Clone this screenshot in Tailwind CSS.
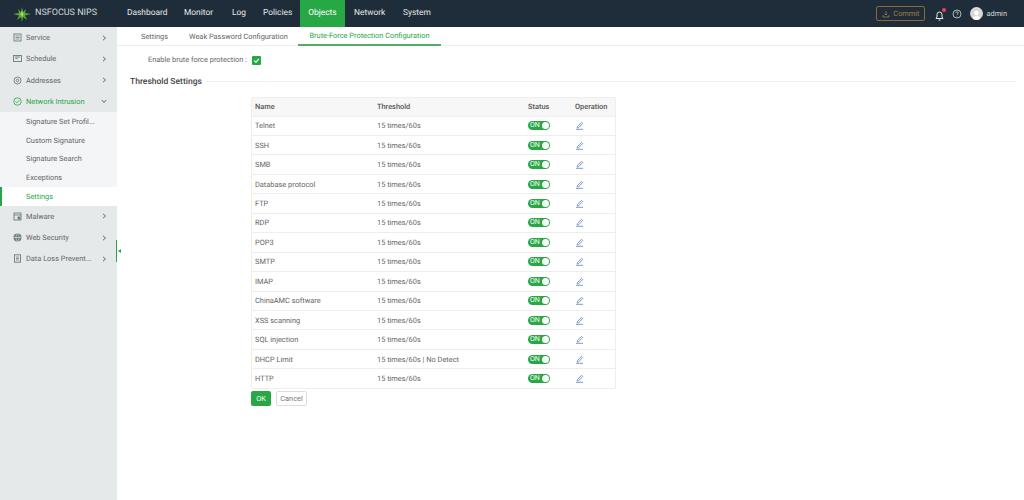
<!DOCTYPE html>
<html><head><meta charset="utf-8"><script src="https://cdn.jsdelivr.net/npm/@tailwindcss/browser@4"></script></head>
<body class="m-0 bg-white">
<div class="w-[1024px] h-[500px] overflow-hidden flex flex-col font-['Roboto','Open_Sans',sans-serif] [text-rendering:geometricPrecision] text-[7.4px] text-[#666]">
<header class="h-[27px] shrink-0 bg-[#1f2d3a] flex items-center text-[#e6e8ea]">
  <div class="w-[117px] flex items-center pl-[13px] gap-[4px]">
    <svg width="18" height="16" viewBox="0 0 18 16"><path d="M9 1 L10 6 L13 3 L12 7 L18 8 L12 9.5 L14 14 L10 11 L9 16 L8 11 L4 14 L6 9.5 L0 8 L6 7 L5 3 L8 6 Z" fill="#5aa83a"/><path d="M9 5 L10.500 8 L9 11 L7.500 8Z" fill="#a8d86a"/></svg>
    <span class="text-[9px] text-[#d5d9dc] whitespace-nowrap">NSFOCUS NIPS</span>
  </div>
  <nav class="flex h-full text-[8.4px] ml-[1px]">
    <a class="pl-[9px] w-[58px] flex items-center">Dashboard</a>
    <a class="pl-[8px] w-[48px] flex items-center">Monitor</a>
    <a class="pl-[8px] w-[31px] flex items-center">Log</a>
    <a class="pl-[8px] w-[45px] flex items-center">Policies</a>
    <a class="w-[45px] justify-center flex items-center bg-[#28a745] text-white">Objects</a>
    <a class="pl-[9px] w-[49px] flex items-center">Network</a>
    <a class="pl-[9px] flex items-center">System</a>
  </nav>
  <div class="ml-auto flex items-center pr-[17px]">
    <div class="w-[49px] h-[15px] border border-[#8a6a3a] rounded-[2px] flex items-center justify-center gap-[3px] text-[#9a7a45]">
      <svg width="8" height="8" viewBox="0 0 8 8" fill="none" stroke="#a67c3f" stroke-width=".8"><path d="M1 5v2h6V5M4 1v4M2.800 3.800 4 5l1.200-1.200"/></svg><span>Commit</span>
    </div>
    <div class="relative ml-[10px] w-[9px] h-[12px]">
      <svg width="9" height="11" viewBox="0 0 9 11" fill="none" stroke="#e6e8ea" stroke-width="1" class="mt-[2px]"><path d="M1 8.500h7L7 7V4.500a2.500 2.500 0 0 0-5 0V7ZM3.500 10h2"/></svg>
      <span class="absolute top-[0px] right-[-2px] w-[4px] h-[4px] rounded-full bg-[#f0405a]"></span>
    </div>
    <svg class="ml-[8px]" width="10" height="10" viewBox="0 0 10 10" fill="none" stroke="#d5d9dc" stroke-width=".8"><circle cx="5" cy="5" r="4"/><path d="M3.800 4a1.200 1.200 0 1 1 1.700 1.100c-.4.200-.5.400-.5.800M5 7.200v.4"/></svg>
    <div class="ml-[8px] w-[13px] h-[13px] rounded-full bg-[#d8d8d8] flex items-end justify-center overflow-hidden">
      <svg width="11" height="11" viewBox="0 0 11 11" fill="#fff"><circle cx="5.500" cy="4" r="2.300"/><path d="M1.500 11c0-3 2-4.300 4-4.300s4 1.300 4 4.300Z"/></svg>
    </div>
    <span class="ml-[3px] text-[#d5d9dc]">admin</span>
  </div>
</header>
<div class="flex flex-1 min-h-0">
  <aside class="relative w-[117px] shrink-0 bg-[#e5e9ea]">
    <div class="h-[21.300px] flex items-center pl-[13px] pr-[10px] gap-[3px]">
      <svg width="9" height="9" viewBox="0 0 9 9" fill="none" stroke="#6f7a7d"><rect x="1" y="1" width="7" height="7" stroke-width=".9"/><path d="M2.500 3h4M2.500 4.500h4M2.500 6h4" stroke-width=".7"/></svg><span class="ml-[1px]">Service</span>
      <svg class="ml-auto" width="5" height="6" viewBox="0 0 5 6" fill="none" stroke="#666" stroke-width="1"><path d="M1 .8 3.500 3 1 5.200"/></svg>
    </div>
    <div class="h-[21.300px] flex items-center pl-[13px] pr-[10px] gap-[3px]">
      <svg width="9" height="9" viewBox="0 0 9 9" fill="none" stroke="#6f7a7d" stroke-width=".9"><rect x=".5" y="1.500" width="8" height="6"/><path d="M2.500 4.500h2M2 3h5"/></svg><span class="ml-[1px]">Schedule</span>
      <svg class="ml-auto" width="5" height="6" viewBox="0 0 5 6" fill="none" stroke="#666" stroke-width="1"><path d="M1 .8 3.500 3 1 5.200"/></svg>
    </div>
    <div class="h-[21.300px] flex items-center pl-[13px] pr-[10px] gap-[3px]">
      <svg width="9" height="9" viewBox="0 0 9 9" fill="none" stroke="#6f7a7d" stroke-width=".9"><circle cx="4.500" cy="4.500" r="3.500"/><circle cx="4.500" cy="4.500" r="1.300"/></svg><span class="ml-[1px]">Addresses</span>
      <svg class="ml-auto" width="5" height="6" viewBox="0 0 5 6" fill="none" stroke="#666" stroke-width="1"><path d="M1 .8 3.500 3 1 5.200"/></svg>
    </div>
    <div class="h-[21.300px] flex items-center pl-[13px] pr-[10px] gap-[3px] text-[#28a745]">
      <svg width="9" height="9" viewBox="0 0 9 9" fill="none" stroke="#28a745" stroke-width=".8"><circle cx="4.500" cy="4.500" r="3.700"/><path d="M2.800 4.500 4 5.800l2.300-2.600"/></svg><span class="ml-[1px]">Network Intrusion</span>
      <svg class="ml-auto" width="6" height="5" viewBox="0 0 6 5" fill="none" stroke="#666" stroke-width="1"><path d="M.8 1 3 3.500 5.200 1"/></svg>
    </div>
    <div class="bg-[#f3f5f6]">
      <div class="h-[18.700px] flex items-center pl-[26px]">Signature Set Profil...</div>
      <div class="h-[18.700px] flex items-center pl-[26px]">Custom Signature</div>
      <div class="h-[18.700px] flex items-center pl-[26px]">Signature Search</div>
      <div class="h-[18.700px] flex items-center pl-[26px]">Exceptions</div>
      <div class="h-[18.700px] flex items-center bg-white text-[#28a745] border-l-2 border-[#28a745] pl-[24px]">Settings</div>
    </div>
    <div class="h-[21.300px] flex items-center pl-[13px] pr-[10px] gap-[3px]">
      <svg width="9" height="9" viewBox="0 0 9 9" fill="none" stroke="#6f7a7d" stroke-width=".9"><rect x="1" y="1" width="7" height="7"/><path d="M1 3h7"/><rect x="5" y="5" width="2" height="2" fill="#6f7a7d"/></svg><span class="ml-[1px]">Malware</span>
      <svg class="ml-auto" width="5" height="6" viewBox="0 0 5 6" fill="none" stroke="#666" stroke-width="1"><path d="M1 .8 3.500 3 1 5.200"/></svg>
    </div>
    <div class="h-[21.300px] flex items-center pl-[13px] pr-[10px] gap-[3px]">
      <svg width="9" height="9" viewBox="0 0 9 9" fill="#6f7a7d"><circle cx="4.500" cy="4.500" r="4"/><path d="M.5 4.500h8M4.500.5c-2 2.500-2 5.500 0 8M4.500.5c2 2.500 2 5.500 0 8" stroke="#e5e9ea" stroke-width=".6" fill="none"/></svg><span class="ml-[1px]">Web Security</span>
      <svg class="ml-auto" width="5" height="6" viewBox="0 0 5 6" fill="none" stroke="#666" stroke-width="1"><path d="M1 .8 3.500 3 1 5.200"/></svg>
    </div>
    <div class="h-[21.300px] flex items-center pl-[13px] pr-[10px] gap-[3px]">
      <svg width="9" height="9" viewBox="0 0 9 9" fill="none" stroke="#6f7a7d" stroke-width=".9"><rect x="1.500" y=".8" width="6" height="7.400"/><path d="M3 3h3M3 4.500h3M3 6h3" stroke-width=".7"/></svg><span class="ml-[1px] whitespace-nowrap">Data Loss Prevent...</span>
      <svg class="ml-auto shrink-0" width="5" height="6" viewBox="0 0 5 6" fill="none" stroke="#666" stroke-width="1"><path d="M1 .8 3.500 3 1 5.200"/></svg>
    </div>
    <div class="absolute top-[213px] left-[116px] w-[5px] h-[22px] border-l border-[#28a745] flex items-center">
      <svg width="3" height="4" viewBox="0 0 3 4" class="ml-[1px]"><path d="M3 0v4L0 2Z" fill="#28a745"/></svg>
    </div>
  </aside>
  <main class="flex-1 min-w-0">
    <div class="h-[19px] border-b border-[#eeeeee] flex items-stretch pl-[13px]">
      <div class="flex items-center w-[48px]"><span class="ml-[11px] mt-[1px]">Settings</span></div>
      <div class="flex items-center w-[120px]"><span class="ml-[11px] mt-[1px] whitespace-nowrap">Weak Password Configuration</span></div>
      <div class="flex items-center justify-center w-[143px] text-[#28a745] border-b-2 border-[#52ad65] h-[19px] whitespace-nowrap pt-[1px]">Brute-Force Protection Configuration</div>
    </div>
    <div class="h-[27px] flex items-center pl-[31px] pt-[1px]">
      <span>Enable brute force protection :</span>
      <span class="ml-[5px] w-[9px] h-[9px] rounded-[1px] bg-[#28a745] flex items-center justify-center"><svg width="7" height="7" viewBox="0 0 7 7" fill="none" stroke="#fff" stroke-width="1.200"><path d="M1.200 3.600 3 5.200 5.900 1.800"/></svg></span>
    </div>
    <div class="h-[17px] flex items-center pl-[13px]">
      <span class="text-[8.500px] font-medium text-[#444] whitespace-nowrap mt-[1px]">Threshold Settings</span>
      <div class="ml-[4px] flex-1 mr-[8px] h-px bg-[#eeeeee]"></div>
    </div>
    <div class="mt-[7px] ml-[134px] w-[365px]">
      <div class="border border-[#eeeeee] rounded-[2px]">
      <table class="w-full border-collapse table-fixed text-left">
        <colgroup><col class="w-[125px]"><col class="w-[151px]"><col class="w-[47px]"><col></colgroup>
        <thead><tr class="h-[18px] bg-[#f7f7f7] text-[#555]"><th class="font-medium pl-[3px]">Name</th><th class="font-medium">Threshold</th><th class="font-medium">Status</th><th class="font-medium">Operation</th></tr></thead>
        <tbody>
          <tr class="h-[19.460px] border-t border-[#eeeeee]"><td class="pl-[3px]">Telnet</td><td>15 times/60s</td><td><div class="w-[22px] h-[9px] rounded-full bg-[#28a745] text-white text-[7px] leading-[9px] pl-[2px] relative">ON<span class="absolute right-[1px] top-[1px] w-[7px] h-[7px] rounded-full bg-white"></span></div></td><td><svg width="9" height="9" viewBox="0 0 9 9" fill="none" stroke="#6f8cc4" stroke-width=".9"><path d="M2.500 5.500 6.500 1.300l1.200 1.200-4 4.200-1.500.3ZM1 8.300h7"/></svg></td></tr>
          <tr class="h-[19.460px] border-t border-[#eeeeee]"><td class="pl-[3px]">SSH</td><td>15 times/60s</td><td><div class="w-[22px] h-[9px] rounded-full bg-[#28a745] text-white text-[7px] leading-[9px] pl-[2px] relative">ON<span class="absolute right-[1px] top-[1px] w-[7px] h-[7px] rounded-full bg-white"></span></div></td><td><svg width="9" height="9" viewBox="0 0 9 9" fill="none" stroke="#6f8cc4" stroke-width=".9"><path d="M2.500 5.500 6.500 1.300l1.200 1.200-4 4.200-1.500.3ZM1 8.300h7"/></svg></td></tr>
          <tr class="h-[19.460px] border-t border-[#eeeeee]"><td class="pl-[3px]">SMB</td><td>15 times/60s</td><td><div class="w-[22px] h-[9px] rounded-full bg-[#28a745] text-white text-[7px] leading-[9px] pl-[2px] relative">ON<span class="absolute right-[1px] top-[1px] w-[7px] h-[7px] rounded-full bg-white"></span></div></td><td><svg width="9" height="9" viewBox="0 0 9 9" fill="none" stroke="#6f8cc4" stroke-width=".9"><path d="M2.500 5.500 6.500 1.300l1.200 1.200-4 4.200-1.500.3ZM1 8.300h7"/></svg></td></tr>
          <tr class="h-[19.460px] border-t border-[#eeeeee]"><td class="pl-[3px]">Database protocol</td><td>15 times/60s</td><td><div class="w-[22px] h-[9px] rounded-full bg-[#28a745] text-white text-[7px] leading-[9px] pl-[2px] relative">ON<span class="absolute right-[1px] top-[1px] w-[7px] h-[7px] rounded-full bg-white"></span></div></td><td><svg width="9" height="9" viewBox="0 0 9 9" fill="none" stroke="#6f8cc4" stroke-width=".9"><path d="M2.500 5.500 6.500 1.300l1.200 1.200-4 4.200-1.500.3ZM1 8.300h7"/></svg></td></tr>
          <tr class="h-[19.460px] border-t border-[#eeeeee]"><td class="pl-[3px]">FTP</td><td>15 times/60s</td><td><div class="w-[22px] h-[9px] rounded-full bg-[#28a745] text-white text-[7px] leading-[9px] pl-[2px] relative">ON<span class="absolute right-[1px] top-[1px] w-[7px] h-[7px] rounded-full bg-white"></span></div></td><td><svg width="9" height="9" viewBox="0 0 9 9" fill="none" stroke="#6f8cc4" stroke-width=".9"><path d="M2.500 5.500 6.500 1.300l1.200 1.200-4 4.200-1.500.3ZM1 8.300h7"/></svg></td></tr>
          <tr class="h-[19.460px] border-t border-[#eeeeee]"><td class="pl-[3px]">RDP</td><td>15 times/60s</td><td><div class="w-[22px] h-[9px] rounded-full bg-[#28a745] text-white text-[7px] leading-[9px] pl-[2px] relative">ON<span class="absolute right-[1px] top-[1px] w-[7px] h-[7px] rounded-full bg-white"></span></div></td><td><svg width="9" height="9" viewBox="0 0 9 9" fill="none" stroke="#6f8cc4" stroke-width=".9"><path d="M2.500 5.500 6.500 1.300l1.200 1.200-4 4.200-1.500.3ZM1 8.300h7"/></svg></td></tr>
          <tr class="h-[19.460px] border-t border-[#eeeeee]"><td class="pl-[3px]">POP3</td><td>15 times/60s</td><td><div class="w-[22px] h-[9px] rounded-full bg-[#28a745] text-white text-[7px] leading-[9px] pl-[2px] relative">ON<span class="absolute right-[1px] top-[1px] w-[7px] h-[7px] rounded-full bg-white"></span></div></td><td><svg width="9" height="9" viewBox="0 0 9 9" fill="none" stroke="#6f8cc4" stroke-width=".9"><path d="M2.500 5.500 6.500 1.300l1.200 1.200-4 4.200-1.500.3ZM1 8.300h7"/></svg></td></tr>
          <tr class="h-[19.460px] border-t border-[#eeeeee]"><td class="pl-[3px]">SMTP</td><td>15 times/60s</td><td><div class="w-[22px] h-[9px] rounded-full bg-[#28a745] text-white text-[7px] leading-[9px] pl-[2px] relative">ON<span class="absolute right-[1px] top-[1px] w-[7px] h-[7px] rounded-full bg-white"></span></div></td><td><svg width="9" height="9" viewBox="0 0 9 9" fill="none" stroke="#6f8cc4" stroke-width=".9"><path d="M2.500 5.500 6.500 1.300l1.200 1.200-4 4.200-1.500.3ZM1 8.300h7"/></svg></td></tr>
          <tr class="h-[19.460px] border-t border-[#eeeeee]"><td class="pl-[3px]">IMAP</td><td>15 times/60s</td><td><div class="w-[22px] h-[9px] rounded-full bg-[#28a745] text-white text-[7px] leading-[9px] pl-[2px] relative">ON<span class="absolute right-[1px] top-[1px] w-[7px] h-[7px] rounded-full bg-white"></span></div></td><td><svg width="9" height="9" viewBox="0 0 9 9" fill="none" stroke="#6f8cc4" stroke-width=".9"><path d="M2.500 5.500 6.500 1.300l1.200 1.200-4 4.200-1.500.3ZM1 8.300h7"/></svg></td></tr>
          <tr class="h-[19.460px] border-t border-[#eeeeee]"><td class="pl-[3px]">ChinaAMC software</td><td>15 times/60s</td><td><div class="w-[22px] h-[9px] rounded-full bg-[#28a745] text-white text-[7px] leading-[9px] pl-[2px] relative">ON<span class="absolute right-[1px] top-[1px] w-[7px] h-[7px] rounded-full bg-white"></span></div></td><td><svg width="9" height="9" viewBox="0 0 9 9" fill="none" stroke="#6f8cc4" stroke-width=".9"><path d="M2.500 5.500 6.500 1.300l1.200 1.200-4 4.200-1.500.3ZM1 8.300h7"/></svg></td></tr>
          <tr class="h-[19.460px] border-t border-[#eeeeee]"><td class="pl-[3px]">XSS scanning</td><td>15 times/60s</td><td><div class="w-[22px] h-[9px] rounded-full bg-[#28a745] text-white text-[7px] leading-[9px] pl-[2px] relative">ON<span class="absolute right-[1px] top-[1px] w-[7px] h-[7px] rounded-full bg-white"></span></div></td><td><svg width="9" height="9" viewBox="0 0 9 9" fill="none" stroke="#6f8cc4" stroke-width=".9"><path d="M2.500 5.500 6.500 1.300l1.200 1.200-4 4.200-1.500.3ZM1 8.300h7"/></svg></td></tr>
          <tr class="h-[19.460px] border-t border-[#eeeeee]"><td class="pl-[3px]">SQL injection</td><td>15 times/60s</td><td><div class="w-[22px] h-[9px] rounded-full bg-[#28a745] text-white text-[7px] leading-[9px] pl-[2px] relative">ON<span class="absolute right-[1px] top-[1px] w-[7px] h-[7px] rounded-full bg-white"></span></div></td><td><svg width="9" height="9" viewBox="0 0 9 9" fill="none" stroke="#6f8cc4" stroke-width=".9"><path d="M2.500 5.500 6.500 1.300l1.200 1.200-4 4.200-1.500.3ZM1 8.300h7"/></svg></td></tr>
          <tr class="h-[19.460px] border-t border-[#eeeeee]"><td class="pl-[3px]">DHCP Limit</td><td>15 times/60s | No Detect</td><td><div class="w-[22px] h-[9px] rounded-full bg-[#28a745] text-white text-[7px] leading-[9px] pl-[2px] relative">ON<span class="absolute right-[1px] top-[1px] w-[7px] h-[7px] rounded-full bg-white"></span></div></td><td><svg width="9" height="9" viewBox="0 0 9 9" fill="none" stroke="#6f8cc4" stroke-width=".9"><path d="M2.500 5.500 6.500 1.300l1.200 1.200-4 4.200-1.500.3ZM1 8.300h7"/></svg></td></tr>
          <tr class="h-[19.460px] border-t border-[#eeeeee]"><td class="pl-[3px]">HTTP</td><td>15 times/60s</td><td><div class="w-[22px] h-[9px] rounded-full bg-[#28a745] text-white text-[7px] leading-[9px] pl-[2px] relative">ON<span class="absolute right-[1px] top-[1px] w-[7px] h-[7px] rounded-full bg-white"></span></div></td><td><svg width="9" height="9" viewBox="0 0 9 9" fill="none" stroke="#6f8cc4" stroke-width=".9"><path d="M2.500 5.500 6.500 1.300l1.200 1.200-4 4.200-1.500.3ZM1 8.300h7"/></svg></td></tr>
        </tbody>
      </table>
      </div>
      <div class="mt-[2px] flex gap-[5px]">
        <button class="w-[20px] h-[15px] rounded-[2px] bg-[#28a745] text-white text-[7.400px]">OK</button>
        <button class="w-[31px] h-[15px] rounded-[2px] border border-[#dddddd] bg-white text-[#777] text-[7.400px]">Cancel</button>
      </div>
    </div>
  </main>
</div>
</div>
</body></html>
